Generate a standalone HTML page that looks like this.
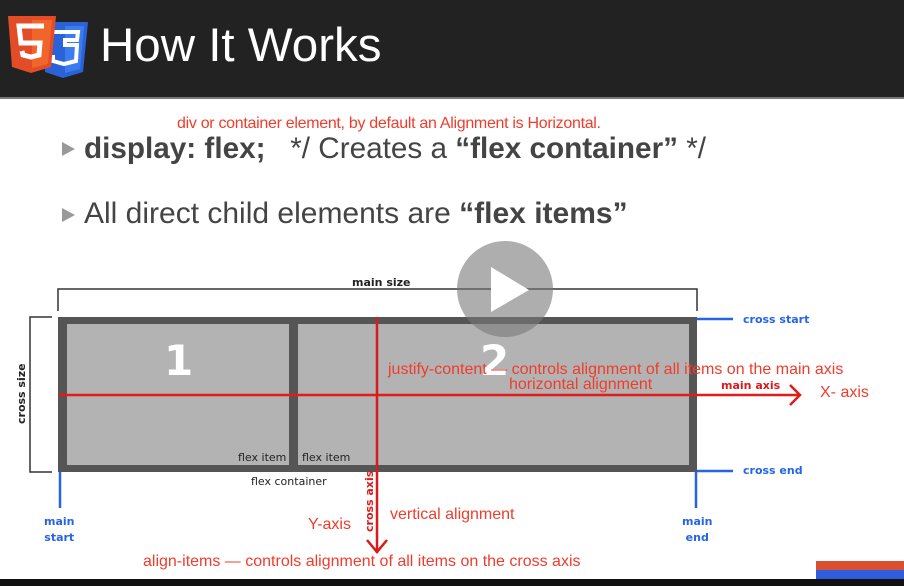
<!DOCTYPE html>
<html><head><style>
body{margin:0;width:904px;height:586px;overflow:hidden;background:#fff;font-family:"Liberation Sans",sans-serif;position:relative}
.a{position:absolute;white-space:nowrap}
.o{font-family:"DejaVu Sans","Liberation Sans",sans-serif}
</style></head><body>
<div class="a" style="left:0;top:0;width:904px;height:97px;background:#222"></div>
<div class="a" style="left:0;top:97px;width:904px;height:2px;background:#777"></div>
<svg class="a" style="left:0;top:0" width="100" height="90">
<path d="M42 22h46l-5 50-20 6-18-6z" fill="#2a62d8"/>
<path d="M65 26h19l-4 43-15 4z" fill="#3d7cf0"/>
<path d="M52 32h26l-1 8h-12l-0 5h12l-1 16-12 3-11-3v-6" fill="none" stroke="#fff" stroke-width="4"/>
<path d="M8 16h48l-5 51-20 6-19-6z" fill="#e34c26"/>
<path d="M32 20h20l-4 44-16 4z" fill="#f06529"/>
<path d="M44 26H19l2 17h19l-1 12-8 2-8-2-1-4" fill="none" stroke="#fff" stroke-width="5"/>
</svg>
<div class="a" style="left:100px;top:18px;font-size:47.5px;color:#fff">How It Works</div>

<div class="a" style="left:177px;top:115px;font-size:16px;color:#f03c2c;letter-spacing:-0.3px">div or container element, by default an Alignment is Horizontal.</div>
<svg class="a" style="left:60px;top:141px" width="16" height="16"><path d="M2 1l13 7-13 7z" fill="#999"/></svg>
<div class="a" style="left:84px;top:132px;font-size:29.7px;color:#444"><b>display: flex;</b>&nbsp;&nbsp; */ Creates a <b>“flex container”</b> */</div>
<svg class="a" style="left:60px;top:207px" width="16" height="16"><path d="M2 1l13 7-13 7z" fill="#999"/></svg>
<div class="a" style="left:84px;top:197px;font-size:30px;color:#444">All direct child elements are <b>“flex items”</b></div>

<svg class="a" style="left:0;top:260px" width="904" height="326">
<path d="M58 51V29H697V51" fill="none" stroke="#333" stroke-width="1.5"/>
<path d="M52 57H30V212H52" fill="none" stroke="#333" stroke-width="1.5"/>
<rect x="58" y="57" width="639" height="155" fill="#555"/>
<rect x="67" y="64" width="222" height="141" fill="#b3b3b3"/>
<rect x="298" y="64" width="391" height="141" fill="#b3b3b3"/>
<path d="M60 212V248M696 212V248M697 59H733M697 211H733" stroke="#2563e8" stroke-width="2.5" fill="none"/>
<path d="M58 135H800M790 125l10 10-10 10" stroke="#e31b1b" stroke-width="2.5" fill="none"/>
<path d="M377 57V293M367 280l10 12 10-12" stroke="#d81b1b" stroke-width="2.5" fill="none"/>
<rect x="816" y="301" width="88" height="9" fill="#d9502e"/>
<rect x="816" y="310" width="88" height="9" fill="#2e5de0"/>
<rect x="0" y="319" width="904" height="7" fill="#111"/>
</svg>
<div class="a o" style="left:352px;top:276px;font-size:11px;font-weight:bold;color:#222">main size</div>
<div class="a o" style="font-size:11px;font-weight:bold;color:#222;transform:rotate(-90deg);transform-origin:0 0;top:424px;left:15px">cross size</div>
<div class="a o" style="left:164px;top:336px;font-size:42px;font-weight:bold;color:#fff">1</div>
<div class="a o" style="left:480px;top:336px;font-size:42px;font-weight:bold;color:#fff">2</div>
<div class="a o" style="left:238px;top:451px;font-size:11px;color:#222">flex item</div>
<div class="a o" style="left:302px;top:451px;font-size:11px;color:#222">flex item</div>
<div class="a o" style="left:251px;top:475px;font-size:11px;color:#222">flex container</div>
<div class="a o" style="left:743px;top:313px;font-size:11px;font-weight:bold;color:#2563e8">cross start</div>
<div class="a o" style="left:743px;top:464px;font-size:11px;font-weight:bold;color:#2563e8">cross end</div>
<div class="a o" style="left:44px;top:514px;font-size:11px;font-weight:bold;color:#2563e8;text-align:center;line-height:16px">main<br>start</div>
<div class="a o" style="left:682px;top:514px;font-size:11px;font-weight:bold;color:#2563e8;text-align:center;line-height:16px">main<br>end</div>
<div class="a o" style="left:721px;top:379px;font-size:11px;font-weight:bold;color:#d81b1b">main axis</div>
<div class="a" style="left:820px;top:384px;font-size:16px;color:#f03c2c">X- axis</div>
<div class="a" style="left:388px;top:361px;font-size:16px;color:#f03c2c">justify-content — controls alignment of all items on the main axis</div>
<div class="a" style="left:509px;top:376px;font-size:16px;color:#f03c2c">horizontal alignment</div>
<div class="a o" style="left:363px;top:532px;font-size:11px;font-weight:bold;color:#d81b1b;transform:rotate(-90deg);transform-origin:0 0">cross axis</div>
<div class="a" style="left:308px;top:516px;font-size:16px;color:#f03c2c">Y-axis</div>
<div class="a" style="left:390px;top:506px;font-size:16px;color:#f03c2c">vertical alignment</div>
<div class="a" style="left:143px;top:553px;font-size:16px;color:#f03c2c;letter-spacing:0">align-items — controls alignment of all items on the cross axis</div>
<svg class="a" style="left:457px;top:241px" width="96" height="96">
<circle cx="48" cy="48" r="48" fill="rgba(120,120,120,0.6)"/>
<path d="M34 26v45l38-22z" fill="#fff"/>
</svg>
</body></html>
